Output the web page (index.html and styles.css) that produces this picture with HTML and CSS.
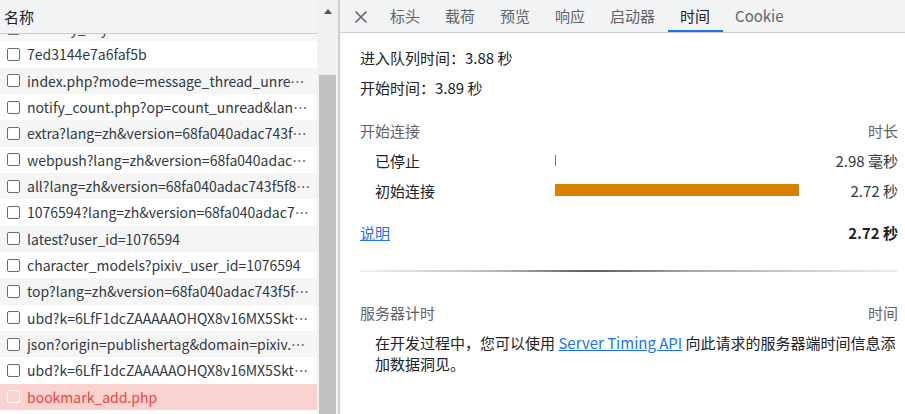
FILE: index.html
```html
<!DOCTYPE html>
<html lang="zh">
<head>
<meta charset="utf-8">
<link rel="stylesheet" href="styles.css">
</head>
<body>
<div class="app">
  <div class="left">
    <div class="list-pane">
      <div class="list-head">名称</div>
      <div class="list-body">
        <div class="list-inner">
          <div class="row alt"><span class="cb"></span><span class="nm">country_key=4b1e6bdade6fe1fbcecbabe0a8e37</span></div>
          <div class="row"><span class="cb"></span><span class="nm">7ed3144e7a6faf5b</span></div>
          <div class="row alt"><span class="cb"></span><span class="nm">index.php?mode=message_thread_unread_count</span></div>
          <div class="row"><span class="cb"></span><span class="nm">notify_count.php?op=count_unread&amp;lang=zh</span></div>
          <div class="row alt"><span class="cb"></span><span class="nm">extra?lang=zh&amp;version=68fa040adac743f5f8</span></div>
          <div class="row"><span class="cb"></span><span class="nm">webpush?lang=zh&amp;version=68fa040adac743f5</span></div>
          <div class="row alt"><span class="cb"></span><span class="nm">all?lang=zh&amp;version=68fa040adac743f5f8c7a</span></div>
          <div class="row"><span class="cb"></span><span class="nm">1076594?lang=zh&amp;version=68fa040adac743f5</span></div>
          <div class="row alt"><span class="cb"></span><span class="nm">latest?user_id=1076594</span></div>
          <div class="row"><span class="cb"></span><span class="nm">character_models?pixiv_user_id=1076594</span></div>
          <div class="row alt"><span class="cb"></span><span class="nm">top?lang=zh&amp;version=68fa040adac743f5f8c7a</span></div>
          <div class="row"><span class="cb"></span><span class="nm">ubd?k=6LfF1dcZAAAAAOHQX8v16MX5SktDwmQINr</span></div>
          <div class="row alt"><span class="cb"></span><span class="nm">json?origin=publishertag&amp;domain=pixiv.net</span></div>
          <div class="row"><span class="cb"></span><span class="nm">ubd?k=6LfF1dcZAAAAAOHQX8v16MX5SktDwmQINr</span></div>
          <div class="row err"><span class="cb"></span><span class="nm">bookmark_add.php</span></div>
        </div>
      </div>
    </div>
    <div class="scrollbar">
      <div class="sb-up"></div>
      <div class="sb-track"><div class="sb-thumb"></div></div>
    </div>
  </div>
  <div class="divider"></div>
  <div class="right">
    <div class="tabs">
      <div class="close">
        <svg width="14" height="14" viewBox="0 0 14 14"><path d="M1.5 1.5 L12.5 12.5 M12.5 1.5 L1.5 12.5" stroke="#5f6368" stroke-width="1.6" fill="none"/></svg>
      </div>
      <div class="tab">标头</div>
      <div class="tab">载荷</div>
      <div class="tab">预览</div>
      <div class="tab">响应</div>
      <div class="tab">启动器</div>
      <div class="tab active">时间</div>
      <div class="tab">Cookie</div>
    </div>
    <div class="content">
      <div class="info">进入队列时间：3.88 秒</div>
      <div class="info">开始时间：3.89 秒</div>
      <div class="grid">
        <div class="gh">开始连接</div>
        <div></div>
        <div class="gh num">时长</div>
        <div class="lbl">已停止</div>
        <div class="barcell"><span class="tick"></span></div>
        <div class="num val">2.98 毫秒</div>
        <div class="lbl">初始连接</div>
        <div class="barcell"><span class="bar" style="width:244px"></span></div>
        <div class="num val">2.72 秒</div>
        <div class="tot"><a class="link" href="#">说明</a></div>
        <div class="tot"></div>
        <div class="tot num total">2.72 秒</div>
      </div>
      <div class="sep"></div>
      <div class="srv-head"><span>服务器计时</span><span>时间</span></div>
      <p class="srv-text">在开发过程中，您可以使用 <a class="link" href="#">Server Timing API</a> 向此请求的服务器端时间信息添加数据洞见。</p>
    </div>
  </div>
</div>
</body>
</html>
```

FILE: styles.css
```css
* { box-sizing: border-box; }
html, body { margin: 0; padding: 0; }
body {
  width: 905px;
  height: 414px;
  overflow: hidden;
  background: #fff;
  font-family: "Noto Sans CJK SC", "Noto Sans", sans-serif;
  font-size: 14px;
  color: #202124;
}
.app { display: flex; height: 414px; }

/* left */
.left { display: flex; width: 338px; flex: none; }
.list-pane { width: 317px; display: flex; flex-direction: column; }
.list-head {
  height: 34px;
  flex: none;
  background: #f1f3f4;
  border-bottom: 1px solid #cacdd1;
  padding-left: 4px;
  line-height: 33px;
  font-size: 15px;
  color: #202124;
  position: relative;
  z-index: 1;
}
.list-body { flex: 1; overflow: hidden; }
.list-inner { margin-top: -19px; }
.row {
  height: 26.33px;
  display: flex;
  align-items: center;
  padding-left: 7px;
  padding-right: 6px;
  background: #fff;
  color: #303942;
  white-space: nowrap;
}
.row.alt { background: #f5f5f5; }
.row.err { background: #fad2cf; color: #e8473c; }
.cb {
  width: 13px;
  height: 13px;
  flex: none;
  border: 1.5px solid #6b6b6b;
  border-radius: 2px;
  background: #fff;
  margin-right: 7px;
}
.row.err .cb { border-color: #fff; background: transparent; }
.nm { overflow: hidden; text-overflow: ellipsis; min-width: 0; }

.scrollbar {
  width: 21px;
  flex: none;
  background: #f1f1f1;
  display: flex;
  flex-direction: column;
}
.sb-up { height: 75px; display: flex; justify-content: center; padding-top: 9px; }
.sb-up::before {
  content: "";
  width: 0; height: 0;
  border-left: 4.5px solid transparent;
  border-right: 4.5px solid transparent;
  border-bottom: 5px solid #505050;
}
.sb-track { flex: 1; padding: 0 2px; }
.sb-thumb { height: 100%; background: #c1c1c1; }

.divider { width: 2px; flex: none; background: #cbcfd4; }

/* right */
.right { flex: 1; display: flex; flex-direction: column; min-width: 0; }
.tabs {
  height: 33px;
  flex: none;
  background: #f1f3f4;
  border-bottom: 1px solid #cacdd1;
  display: flex;
  align-items: stretch;
  padding-left: 14px;
}
.close { width: 23.5px; display: flex; align-items: center; padding-top: 1px; }
.tab {
  padding: 0 12.5px;
  line-height: 31px;
  color: #5f6368;
  border-bottom: 2px solid transparent;
  font-size: 15px;
}
.tab.active { color: #202124; border-bottom-color: #1a73e8; }

.content { padding: 10px 7px 0 20px; font-size: 15px; }
.info { line-height: 30px; }
.grid {
  display: grid;
  grid-template-columns: 195px 244px 1fr;
  grid-template-rows: 30px 30px 30px 43px;
  align-items: center;
  margin-top: 12px;
}
.gh { color: #5f6368; }
.num { text-align: right; }
.lbl { padding-left: 15px; }
.val { color: #303942; }
.barcell { display: flex; align-items: center; height: 100%; }
.tick { width: 1px; height: 11px; background: #777; margin-left: 0; }
.bar { height: 12px; background: #d78200; display: block; }
.tot { align-self: end; height: 30px; line-height: 30px; }
.total { font-weight: bold; color: #202124; }
.link { color: #1a73e8; text-decoration: underline; }
.sep {
  height: 2px;
  margin-top: 22px;
  background: linear-gradient(90deg, #f2f2f2 0%, #b8b8b8 25%, #5c5c5c 43%, #a8a8a8 62%, #eeeeee 100%);
}
.srv-head {
  display: flex;
  justify-content: space-between;
  line-height: 30px;
  margin-top: 26px;
  color: #5f6368;
}
.srv-text {
  margin: 4px 0 0 0;
  padding-left: 15px;
  line-height: 21px;
  color: #202124;
}
```
